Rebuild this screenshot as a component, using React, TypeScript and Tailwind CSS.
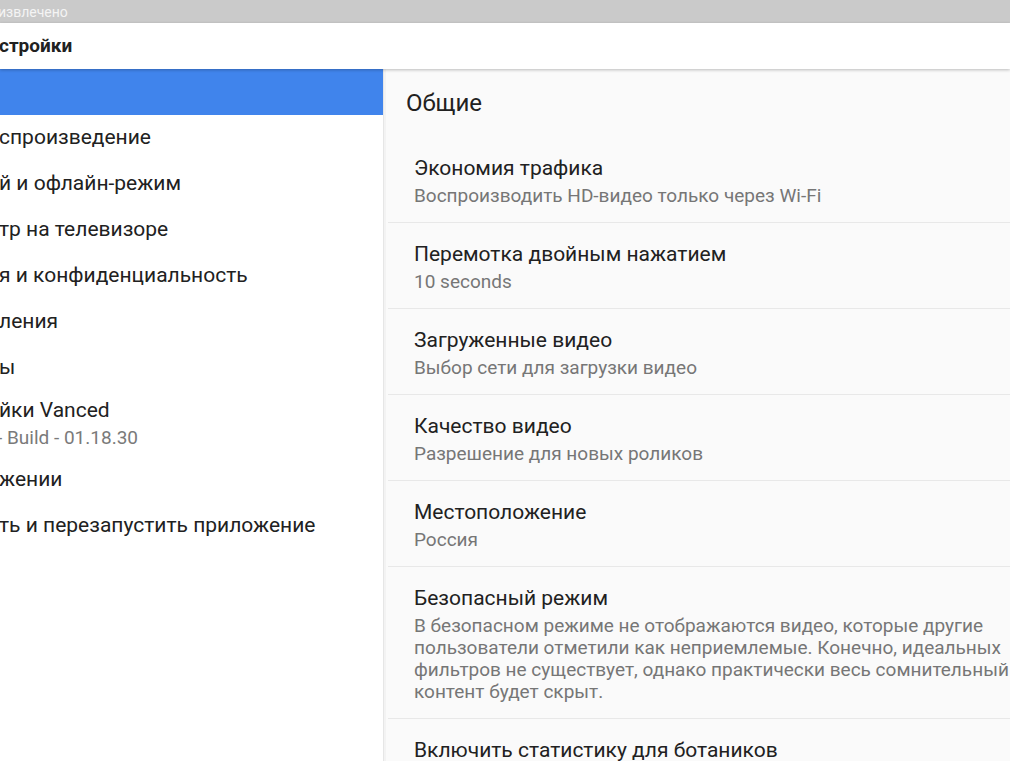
const leftItems = [
  { title: 'спроизведение' },
  { title: 'й и офлайн-режим' },
  { title: 'тр на телевизоре' },
  { title: 'я и конфиденциальность' },
  { title: 'ления' },
  { title: 'ы' },
  { title: 'йки Vanced', sub: '- Build - 01.18.30' },
  { title: 'жении' },
  { title: 'ть и перезапустить приложение' },
];

const prefs = [
  { title: 'Экономия трафика', sub: ['Воспроизводить HD-видео только через Wi-Fi'] },
  { title: 'Перемотка двойным нажатием', sub: ['10 seconds'] },
  { title: 'Загруженные видео', sub: ['Выбор сети для загрузки видео'] },
  { title: 'Качество видео', sub: ['Разрешение для новых роликов'] },
  { title: 'Местоположение', sub: ['Россия'] },
  {
    title: 'Безопасный режим',
    sub: [
      'В безопасном режиме не отображаются видео, которые другие',
      'пользователи отметили как неприемлемые. Конечно, идеальных',
      'фильтров не существует, однако практически весь сомнительный',
      'контент будет скрыт.',
    ],
  },
  { title: 'Включить статистику для ботаников', sub: [] },
];

export default function App() {
  return (
    <div className="w-[1010px] h-[761px] overflow-hidden bg-white flex flex-col font-['Roboto',sans-serif]">
      <div className="h-[23px] shrink-0 bg-[#cacaca] flex items-center">
        <span className="text-[14px] text-[#f4f4f4] ml-[-2px] leading-none">извлечено</span>
      </div>

      <div className="h-[46px] shrink-0 bg-white flex items-center relative z-10 shadow-[0_1px_3px_rgba(0,0,0,0.25)]">
        <span className="text-[19px] font-bold text-[#212121] ml-[-1px]">стройки</span>
      </div>

      <div className="flex flex-1 min-h-0">
        <div className="w-[383px] shrink-0 bg-white flex flex-col">
          <div className="h-[46px] bg-[#4084ec]" />
          {leftItems.map((it) =>
            it.sub ? (
              <div key={it.title} className="h-[66px] flex flex-col justify-center">
                <span className="text-[21px] leading-[27px] text-[#212121] whitespace-nowrap ml-[-1px]">{it.title}</span>
                <span className="text-[19px] leading-[27px] text-[#7a7a7a] whitespace-nowrap ml-[-3px]">{it.sub}</span>
              </div>
            ) : (
              <div key={it.title} className="h-[46px] flex items-center">
                <span className="text-[21px] text-[#212121] whitespace-nowrap ml-[-1px]">{it.title}</span>
              </div>
            )
          )}
        </div>

        <div className="w-[3px] shrink-0 bg-[#f3f3f3] border-l border-[#e6e6e6]" />

        <div className="flex-1 bg-[#fafafa] flex flex-col">
          <div className="h-[68px] shrink-0 flex items-center pl-[20px]">
            <span className="text-[24px] text-[#212121]">Общие</span>
          </div>
          {prefs.map((p) => (
            <div key={p.title} className="ml-[2px] border-b border-[#e8e8e8]">
              <div className="pl-[26px] pt-[18px] pb-[15px]">
                <div className="text-[21px] leading-[27px] text-[#212121] whitespace-nowrap">{p.title}</div>
                {p.sub.length > 0 && (
                  <div className="mt-[3px] text-[19px] leading-[22px] text-[#767676]">
                    {p.sub.map((line) => (
                      <div key={line} className="whitespace-nowrap">{line}</div>
                    ))}
                  </div>
                )}
              </div>
            </div>
          ))}
        </div>
      </div>
    </div>
  );
}
